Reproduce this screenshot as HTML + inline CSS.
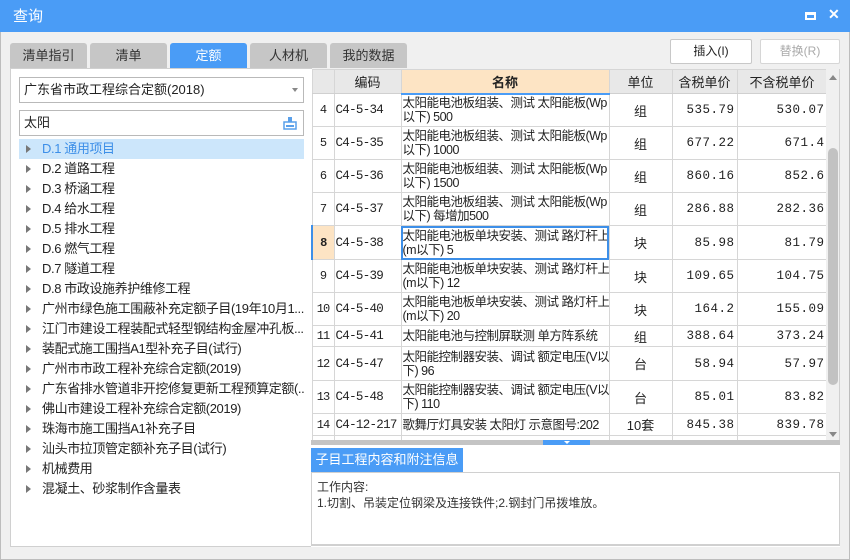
<!DOCTYPE html>
<html><head><meta charset="utf-8"><style>
*{margin:0;padding:0;box-sizing:border-box}
body{width:850px;height:560px;background:#f0f0f0;font-family:"Liberation Sans","Noto Sans CJK SC",sans-serif;font-size:13px;color:#222;position:relative;overflow:hidden}
.abs{position:absolute}
#win{left:0;top:0;width:850px;height:560px;border:1px solid #bdbdbd}
#title{left:0;top:0;width:850px;height:32px;background:#4a9cf6;color:#fff;font-size:15px;line-height:34px;padding-left:13px}
.tab{top:43px;height:25px;width:77px;background:#c6c6c6;border-radius:3px 3px 0 0;text-align:center;line-height:25px;font-size:13px;color:#333}
.tab.on{background:#4a9cf6;color:#fff}
.btn{top:39px;height:25px;width:82px;border:1px solid #c8c8c8;border-radius:2px;background:#fff;text-align:center;line-height:23px;font-size:12px}
#left{left:10px;top:68px;width:302px;height:479px;background:#fff;border:1px solid #d0d0d0}
.inp{left:19px;width:285px;height:26px;border:1px solid #b9b9b9;background:#fff;padding-left:4px;line-height:24px;font-size:13px}
.tr{left:19px;width:285px;height:20px;line-height:20px;padding-left:23px;font-size:13px;white-space:nowrap;overflow:hidden;letter-spacing:-0.4px}
.tr:before{content:"";position:absolute;left:7px;top:6px;border-left:5px solid #777;border-top:4px solid transparent;border-bottom:4px solid transparent}
.tr.sel{background:#cce6fb;color:#3d8fe8}
#grid{left:311px;top:69px;width:515px;border-collapse:collapse;table-layout:fixed;background:#fff}
#grid td{border:1px solid #d6d6d6;font-size:12px;overflow:hidden;white-space:nowrap}
#grid tr.h td{background:#e8e8e8;height:24px;text-align:center;font-size:13px;border-bottom:1px solid #d0d0d0}
#grid tr.h td.nm{background:#fde4c4;font-weight:bold;border-bottom:2px solid #4a9cf6}
#grid td.n{text-align:center;font-family:"Liberation Mono",monospace;font-size:12px;background:#fff;letter-spacing:-1px}
#grid td.c{font-family:"Liberation Mono",monospace;padding-left:1px;font-size:12.5px;letter-spacing:-0.7px}
#grid td.m{line-height:14px;padding-left:1px;font-size:12.5px;letter-spacing:-0.5px}
#grid td.u{text-align:center;font-size:13px}
#grid td.p{text-align:right;font-family:"Liberation Mono",monospace;padding-right:2px;font-size:12.5px;letter-spacing:0.5px}
#grid td.sel{outline:2px solid #3d8fe8;outline-offset:-2px}
#grid td.rn{background:#fde4c4;font-weight:bold;border-left:2px solid #3d8fe8}
</style></head><body>
<div id="win" class="abs"></div>
<div id="title" class="abs">查询</div>
<div class="abs" style="left:805px;top:12px;width:11px;height:8px;border-style:solid;border-color:#fff;border-width:3px 2px 2px 2px"></div>
<div class="abs" style="left:828px;top:6px;color:#fff;font-size:14px;font-weight:bold">✕</div>

<div class="tab abs" style="left:10px">清单指引</div>
<div class="tab abs" style="left:90px">清单</div>
<div class="tab abs on" style="left:170px">定额</div>
<div class="tab abs" style="left:250px">人材机</div>
<div class="tab abs" style="left:330px">我的数据</div>
<div class="btn abs" style="left:670px">插入(I)</div>
<div class="btn abs" style="left:760px;width:80px;color:#aaa;border-color:#d6d6d6">替换(R)</div>

<div id="left" class="abs"></div>
<div class="inp abs" style="top:77px">广东省市政工程综合定额(2018)<span class="abs" style="right:5px;top:10px;border-top:4px solid #888;border-left:3px solid transparent;border-right:3px solid transparent"></span></div>
<div class="inp abs" style="top:110px">太阳
<svg class="abs" style="right:6px;top:5px" width="14" height="14" viewBox="0 0 14 14"><rect x="1" y="6" width="12" height="7" fill="none" stroke="#5aa0ea" stroke-width="1.5"/><rect x="5" y="1" width="4" height="5" fill="#5aa0ea"/><rect x="3" y="9" width="8" height="2" fill="#5aa0ea"/></svg></div>
<div class="tr abs sel" style="top:139px">D.1 通用项目</div>
<div class="tr abs" style="top:159px">D.2 道路工程</div>
<div class="tr abs" style="top:179px">D.3 桥涵工程</div>
<div class="tr abs" style="top:199px">D.4 给水工程</div>
<div class="tr abs" style="top:219px">D.5 排水工程</div>
<div class="tr abs" style="top:239px">D.6 燃气工程</div>
<div class="tr abs" style="top:259px">D.7 隧道工程</div>
<div class="tr abs" style="top:279px">D.8 市政设施养护维修工程</div>
<div class="tr abs" style="top:299px">广州市绿色施工围蔽补充定额子目(19年10月1...</div>
<div class="tr abs" style="top:319px">江门市建设工程装配式轻型钢结构金屋冲孔板...</div>
<div class="tr abs" style="top:339px">装配式施工围挡A1型补充子目(试行)</div>
<div class="tr abs" style="top:359px">广州市市政工程补充综合定额(2019)</div>
<div class="tr abs" style="top:379px">广东省排水管道非开挖修复更新工程预算定额(...</div>
<div class="tr abs" style="top:399px">佛山市建设工程补充综合定额(2019)</div>
<div class="tr abs" style="top:419px">珠海市施工围挡A1补充子目</div>
<div class="tr abs" style="top:439px">汕头市拉顶管定额补充子目(试行)</div>
<div class="tr abs" style="top:459px">机械费用</div>
<div class="tr abs" style="top:479px">混凝土、砂浆制作含量表</div>

<div class="abs" style="left:311px;top:69px;width:529px;height:371px;background:#fff;border-right:1px solid #d0d0d0;overflow:hidden">
<table id="grid" style="left:0;top:0;position:absolute">
<colgroup><col style="width:22px"><col style="width:67px"><col style="width:208px"><col style="width:63px"><col style="width:65px"><col style="width:90px"></colgroup>
<tr class="h"><td></td><td>编码</td><td class="nm">名称</td><td>单位</td><td>含税单价</td><td>不含税单价</td></tr>
<tr style="height:33px"><td class="n">4</td><td class="c">C4-5-34</td><td class="m">太阳能电池板组装、测试 太阳能板(Wp<br>以下) 500</td><td class="u">组</td><td class="p">535.79</td><td class="p">530.07</td></tr>
<tr style="height:33px"><td class="n">5</td><td class="c">C4-5-35</td><td class="m">太阳能电池板组装、测试 太阳能板(Wp<br>以下) 1000</td><td class="u">组</td><td class="p">677.22</td><td class="p">671.4</td></tr>
<tr style="height:33px"><td class="n">6</td><td class="c">C4-5-36</td><td class="m">太阳能电池板组装、测试 太阳能板(Wp<br>以下) 1500</td><td class="u">组</td><td class="p">860.16</td><td class="p">852.6</td></tr>
<tr style="height:33px"><td class="n">7</td><td class="c">C4-5-37</td><td class="m">太阳能电池板组装、测试 太阳能板(Wp<br>以下) 每增加500</td><td class="u">组</td><td class="p">286.88</td><td class="p">282.36</td></tr>
<tr style="height:34px"><td class="n rn">8</td><td class="c">C4-5-38</td><td class="m sel">太阳能电池板单块安装、测试 路灯杆上<br>(m以下) 5</td><td class="u">块</td><td class="p">85.98</td><td class="p">81.79</td></tr>
<tr style="height:33px"><td class="n">9</td><td class="c">C4-5-39</td><td class="m">太阳能电池板单块安装、测试 路灯杆上<br>(m以下) 12</td><td class="u">块</td><td class="p">109.65</td><td class="p">104.75</td></tr>
<tr style="height:33px"><td class="n">10</td><td class="c">C4-5-40</td><td class="m">太阳能电池板单块安装、测试 路灯杆上<br>(m以下) 20</td><td class="u">块</td><td class="p">164.2</td><td class="p">155.09</td></tr>
<tr style="height:21px"><td class="n">11</td><td class="c">C4-5-41</td><td class="m">太阳能电池与控制屏联测 单方阵系统</td><td class="u">组</td><td class="p">388.64</td><td class="p">373.24</td></tr>
<tr style="height:34px"><td class="n">12</td><td class="c">C4-5-47</td><td class="m">太阳能控制器安装、调试 额定电压(V以<br>下) 96</td><td class="u">台</td><td class="p">58.94</td><td class="p">57.97</td></tr>
<tr style="height:33px"><td class="n">13</td><td class="c">C4-5-48</td><td class="m">太阳能控制器安装、调试 额定电压(V以<br>下) 110</td><td class="u">台</td><td class="p">85.01</td><td class="p">83.82</td></tr>
<tr style="height:22px"><td class="n">14</td><td class="c">C4-12-217</td><td class="m">歌舞厅灯具安装 太阳灯 示意图号:202</td><td class="u">10套</td><td class="p">845.38</td><td class="p">839.78</td></tr>
<tr style="height:22px"><td class="n"></td><td></td><td></td><td></td><td></td><td></td></tr>
</table>
<div class="abs" style="left:515px;top:0;width:14px;height:371px;background:#f0f0f0"></div>
<div class="abs" style="left:517px;top:79px;width:10px;height:237px;background:#c2c2c2;border-radius:5px"></div>
<div class="abs" style="left:518px;top:6px;border-bottom:5px solid #888;border-left:4px solid transparent;border-right:4px solid transparent"></div>
<div class="abs" style="left:518px;top:363px;border-top:5px solid #888;border-left:4px solid transparent;border-right:4px solid transparent"></div>
</div>
<div class="abs" style="left:311px;top:440px;width:529px;height:5px;background:#c4c4c4"></div>
<div class="abs" style="left:543px;top:440px;width:47px;height:5px;background:#4a9cf6"></div>
<div class="abs" style="left:564px;top:441px;border-top:3px solid #fff;border-left:3px solid transparent;border-right:3px solid transparent"></div>
<div class="abs" style="left:311px;top:445px;width:529px;height:102px;background:#fff"></div>
<div class="abs" style="left:311px;top:448px;width:152px;height:24px;background:#4a9cf6;color:#fff;text-align:center;line-height:24px;font-size:13px">子目工程内容和附注信息</div>
<div class="abs" style="left:311px;top:472px;width:529px;height:74px;border:1px solid #d0d0d0;border-bottom:2px solid #d0d0d0;padding:6px 0 0 5px;font-size:12px;line-height:16px;color:#333">工作内容:<br>1.切割、吊装定位钢梁及连接铁件;2.钢封门吊拨堆放。</div>
</body></html>
